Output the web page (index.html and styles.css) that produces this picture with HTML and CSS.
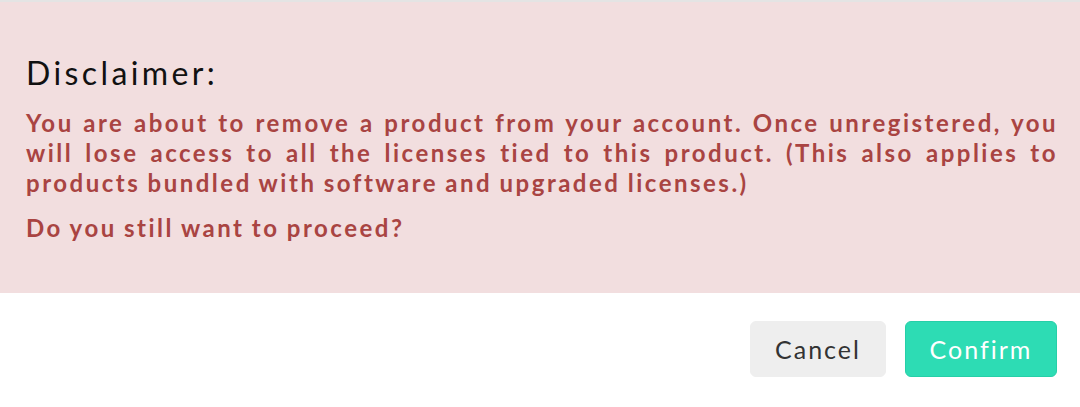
FILE: index.html
```html
<!DOCTYPE html>
<html>
<head>
<meta charset="utf-8">
<link rel="stylesheet" href="styles.css">
</head>
<body>
<div class="modal">
  <div class="alert">
    <h2 class="alert-title">Disclaimer:</h2>
    <p class="alert-text">You are about to remove a product from your account. Once unregistered, you will lose access to all the licenses tied to this product. (This also applies to products bundled with software and upgraded licenses.)</p>
    <p class="alert-text">Do you still want to proceed?</p>
  </div>
  <div class="footer">
    <button class="btn btn-cancel">Cancel</button>
    <button class="btn btn-confirm">Confirm</button>
  </div>
</div>
</body>
</html>
```
FILE: styles.css
```css
html, body {
  margin: 0;
  padding: 0;
  background: #ffffff;
}
body {
  font-family: "Lato", "Open Sans", sans-serif;
}
.modal {
  width: 1080px;
  height: 407px;
  border-top: 2px solid #e4e4e4;
  box-sizing: border-box;
  display: flex;
  flex-direction: column;
}
.alert {
  background: #f2dedf;
  padding: 51px 22px 42px 26px;
  height: 291px;
  box-sizing: border-box;
}
.alert-title {
  margin: 0 0 15px 0;
  font-weight: 400;
  font-size: 32px;
  line-height: 40px;
  letter-spacing: 3.4px;
  color: #111111;
}
.alert-text {
  margin: 0 0 15px 0;
  color: #a94442;
  font-weight: 700;
  font-size: 24px;
  line-height: 30px;
  letter-spacing: 2.5px;
  word-spacing: -1px;
  text-align: justify;
}
.footer {
  display: flex;
  justify-content: flex-end;
  gap: 19px;
  padding: 28px 23px 0 0;
}
.btn {
  height: 56px;
  border-radius: 6px;
  font-family: "Lato", "Open Sans", sans-serif;
  font-size: 25px;
  letter-spacing: 2px;
  border: 1px solid transparent;
  cursor: pointer;
  padding: 0;
}
.btn-cancel {
  width: 136px;
  background: #eeeeee;
  border-color: #eeeeee;
  color: #333333;
}
.btn-confirm {
  width: 152px;
  background: #2ddcb4;
  border-color: #26cfa8;
  color: #ffffff;
}
```
